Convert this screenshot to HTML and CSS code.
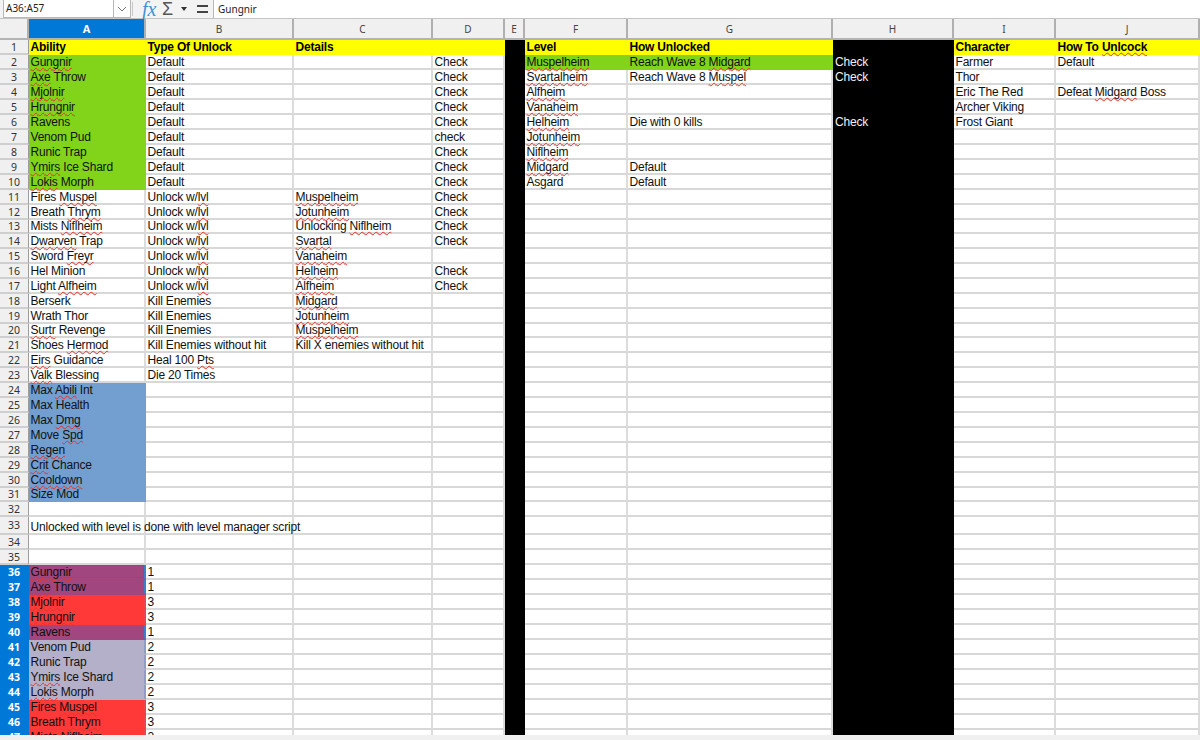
FILE: index.html
```html
<!DOCTYPE html>
<html lang="en">
<head>
  <meta charset="UTF-8">
  <title>Abilities - Calc</title>
  <link rel="stylesheet" href="styles.css">
</head>
<body>
  <div class="formula-bar">
    <div class="name-box"><span class="name-text">A36:A57</span><span class="name-drop"><svg width="10" height="6" viewBox="0 0 10 6"><path d="M1 1l4 4 4-4" fill="none" stroke="#777" stroke-width="1"/></svg></span></div>
    <div class="bar-sep"></div>
    <span class="fx">fx</span>
    <span class="sigma">Σ</span>
    <span class="tri"></span>
    <span class="equals"></span>
    <div class="input-line">Gungnir</div>
  </div>
  <div class="sheet">
    <table>
      <colgroup>
        <col class="c-head"><col class="c-a"><col class="c-b"><col class="c-c"><col class="c-d"><col class="c-e"><col class="c-f"><col class="c-g"><col class="c-h"><col class="c-i"><col class="c-j">
      </colgroup>
      <thead>
        <tr><th class="corner"></th><th class="on">A</th><th>B</th><th>C</th><th>D</th><th>E</th><th>F</th><th>G</th><th>H</th><th>I</th><th>J</th></tr>
      </thead>
      <tbody>
        <tr><th>1</th><td class="yl b">Ability</td><td class="yl b">Type Of Unlock</td><td class="yl b">Details</td><td class="yl"></td><td class="bk"></td><td class="yl b">Level</td><td class="yl b">How Unlocked</td><td class="bk"></td><td class="yl b">Character</td><td class="yl b">How To <u>Unlcock</u></td></tr>
        <tr><th>2</th><td class="gr"><u>Gungnir</u></td><td>Default</td><td></td><td>Check</td><td class="bk"></td><td class="gr"><u>Muspelheim</u></td><td class="gr">Reach Wave 8 <u>Midgard</u></td><td class="bk">Check</td><td>Farmer</td><td>Default</td></tr>
        <tr><th>3</th><td class="gr"><u>Axe</u> Throw</td><td>Default</td><td></td><td>Check</td><td class="bk"></td><td><u>Svartalheim</u></td><td>Reach Wave 8 <u>Muspel</u></td><td class="bk">Check</td><td>Thor</td><td></td></tr>
        <tr><th>4</th><td class="gr"><u>Mjolnir</u></td><td>Default</td><td></td><td>Check</td><td class="bk"></td><td><u>Alfheim</u></td><td></td><td class="bk"></td><td>Eric The Red</td><td>Defeat <u>Midgard</u> Boss</td></tr>
        <tr><th>5</th><td class="gr"><u>Hrungnir</u></td><td>Default</td><td></td><td>Check</td><td class="bk"></td><td><u>Vanaheim</u></td><td></td><td class="bk"></td><td>Archer Viking</td><td></td></tr>
        <tr><th>6</th><td class="gr">Ravens</td><td>Default</td><td></td><td>Check</td><td class="bk"></td><td><u>Helheim</u></td><td>Die with 0 kills</td><td class="bk">Check</td><td>Frost Giant</td><td></td></tr>
        <tr><th>7</th><td class="gr">Venom Pud</td><td>Default</td><td></td><td>check</td><td class="bk"></td><td><u>Jotunheim</u></td><td></td><td class="bk"></td><td></td><td></td></tr>
        <tr><th>8</th><td class="gr">Runic Trap</td><td>Default</td><td></td><td>Check</td><td class="bk"></td><td><u>Niflheim</u></td><td></td><td class="bk"></td><td></td><td></td></tr>
        <tr><th>9</th><td class="gr"><u>Ymirs</u> Ice Shard</td><td>Default</td><td></td><td>Check</td><td class="bk"></td><td><u>Midgard</u></td><td>Default</td><td class="bk"></td><td></td><td></td></tr>
        <tr><th>10</th><td class="gr"><u>Lokis</u> Morph</td><td>Default</td><td></td><td>Check</td><td class="bk"></td><td>Asgard</td><td>Default</td><td class="bk"></td><td></td><td></td></tr>
        <tr><th>11</th><td>Fires <u>Muspel</u></td><td>Unlock w/<u>lvl</u></td><td><u>Muspelheim</u></td><td>Check</td><td class="bk"></td><td></td><td></td><td class="bk"></td><td></td><td></td></tr>
        <tr><th>12</th><td>Breath <u>Thrym</u></td><td>Unlock w/<u>lvl</u></td><td><u>Jotunheim</u></td><td>Check</td><td class="bk"></td><td></td><td></td><td class="bk"></td><td></td><td></td></tr>
        <tr class="short"><th>13</th><td>Mists <u>Niflheim</u></td><td>Unlock w/<u>lvl</u></td><td>Unlocking <u>Niflheim</u></td><td>Check</td><td class="bk"></td><td></td><td></td><td class="bk"></td><td></td><td></td></tr>
        <tr><th>14</th><td><u>Dwarven</u> Trap</td><td>Unlock w/<u>lvl</u></td><td><u>Svartal</u></td><td>Check</td><td class="bk"></td><td></td><td></td><td class="bk"></td><td></td><td></td></tr>
        <tr><th>15</th><td>Sword <u>Freyr</u></td><td>Unlock w/<u>lvl</u></td><td><u>Vanaheim</u></td><td></td><td class="bk"></td><td></td><td></td><td class="bk"></td><td></td><td></td></tr>
        <tr><th>16</th><td>Hel Minion</td><td>Unlock w/<u>lvl</u></td><td><u>Helheim</u></td><td>Check</td><td class="bk"></td><td></td><td></td><td class="bk"></td><td></td><td></td></tr>
        <tr><th>17</th><td>Light <u>Alfheim</u></td><td>Unlock w/<u>lvl</u></td><td><u>Alfheim</u></td><td>Check</td><td class="bk"></td><td></td><td></td><td class="bk"></td><td></td><td></td></tr>
        <tr><th>18</th><td>Berserk</td><td>Kill Enemies</td><td><u>Midgard</u></td><td></td><td class="bk"></td><td></td><td></td><td class="bk"></td><td></td><td></td></tr>
        <tr><th>19</th><td>Wrath Thor</td><td>Kill Enemies</td><td><u>Jotunheim</u></td><td></td><td class="bk"></td><td></td><td></td><td class="bk"></td><td></td><td></td></tr>
        <tr class="short"><th>20</th><td><u>Surtr</u> Revenge</td><td>Kill Enemies</td><td><u>Muspelheim</u></td><td></td><td class="bk"></td><td></td><td></td><td class="bk"></td><td></td><td></td></tr>
        <tr><th>21</th><td>Shoes <u>Hermod</u></td><td>Kill Enemies without hit</td><td>Kill X enemies without hit</td><td></td><td class="bk"></td><td></td><td></td><td class="bk"></td><td></td><td></td></tr>
        <tr><th>22</th><td><u>Eirs</u> Guidance</td><td>Heal 100 <u>Pts</u></td><td></td><td></td><td class="bk"></td><td></td><td></td><td class="bk"></td><td></td><td></td></tr>
        <tr><th>23</th><td><u>Valk</u> Blessing</td><td>Die 20 Times</td><td></td><td></td><td class="bk"></td><td></td><td></td><td class="bk"></td><td></td><td></td></tr>
        <tr><th>24</th><td class="bl">Max <u>Abili</u> Int</td><td></td><td></td><td></td><td class="bk"></td><td></td><td></td><td class="bk"></td><td></td><td></td></tr>
        <tr><th>25</th><td class="bl">Max Health</td><td></td><td></td><td></td><td class="bk"></td><td></td><td></td><td class="bk"></td><td></td><td></td></tr>
        <tr><th>26</th><td class="bl">Max <u>Dmg</u></td><td></td><td></td><td></td><td class="bk"></td><td></td><td></td><td class="bk"></td><td></td><td></td></tr>
        <tr><th>27</th><td class="bl">Move <u>Spd</u></td><td></td><td></td><td></td><td class="bk"></td><td></td><td></td><td class="bk"></td><td></td><td></td></tr>
        <tr><th>28</th><td class="bl"><u>Regen</u></td><td></td><td></td><td></td><td class="bk"></td><td></td><td></td><td class="bk"></td><td></td><td></td></tr>
        <tr><th>29</th><td class="bl"><u>Crit</u> Chance</td><td></td><td></td><td></td><td class="bk"></td><td></td><td></td><td class="bk"></td><td></td><td></td></tr>
        <tr><th>30</th><td class="bl"><u>Cooldown</u></td><td></td><td></td><td></td><td class="bk"></td><td></td><td></td><td class="bk"></td><td></td><td></td></tr>
        <tr class="short"><th>31</th><td class="bl">Size Mod</td><td></td><td></td><td></td><td class="bk"></td><td></td><td></td><td class="bk"></td><td></td><td></td></tr>
        <tr><th>32</th><td></td><td></td><td></td><td></td><td class="bk"></td><td></td><td></td><td class="bk"></td><td></td><td></td></tr>
        <tr class="tall"><th>33</th><td>Unlocked with level is done with level manager script</td><td></td><td></td><td></td><td class="bk"></td><td></td><td></td><td class="bk"></td><td></td><td></td></tr>
        <tr><th>34</th><td></td><td></td><td></td><td></td><td class="bk"></td><td></td><td></td><td class="bk"></td><td></td><td></td></tr>
        <tr><th>35</th><td></td><td></td><td></td><td></td><td class="bk"></td><td></td><td></td><td class="bk"></td><td></td><td></td></tr>
        <tr class="picked"><th>36</th><td class="pu cur"><u>Gungnir</u></td><td>1</td><td></td><td></td><td class="bk"></td><td></td><td></td><td class="bk"></td><td></td><td></td></tr>
        <tr class="picked"><th>37</th><td class="pu"><u>Axe</u> Throw</td><td>1</td><td></td><td></td><td class="bk"></td><td></td><td></td><td class="bk"></td><td></td><td></td></tr>
        <tr class="picked"><th>38</th><td class="rd"><u>Mjolnir</u></td><td>3</td><td></td><td></td><td class="bk"></td><td></td><td></td><td class="bk"></td><td></td><td></td></tr>
        <tr class="picked"><th>39</th><td class="rd"><u>Hrungnir</u></td><td>3</td><td></td><td></td><td class="bk"></td><td></td><td></td><td class="bk"></td><td></td><td></td></tr>
        <tr class="picked"><th>40</th><td class="pu">Ravens</td><td>1</td><td></td><td></td><td class="bk"></td><td></td><td></td><td class="bk"></td><td></td><td></td></tr>
        <tr class="picked"><th>41</th><td class="lv">Venom Pud</td><td>2</td><td></td><td></td><td class="bk"></td><td></td><td></td><td class="bk"></td><td></td><td></td></tr>
        <tr class="picked"><th>42</th><td class="lv">Runic Trap</td><td>2</td><td></td><td></td><td class="bk"></td><td></td><td></td><td class="bk"></td><td></td><td></td></tr>
        <tr class="picked"><th>43</th><td class="lv"><u>Ymirs</u> Ice Shard</td><td>2</td><td></td><td></td><td class="bk"></td><td></td><td></td><td class="bk"></td><td></td><td></td></tr>
        <tr class="picked"><th>44</th><td class="lv"><u>Lokis</u> Morph</td><td>2</td><td></td><td></td><td class="bk"></td><td></td><td></td><td class="bk"></td><td></td><td></td></tr>
        <tr class="picked"><th>45</th><td class="rd">Fires <u>Muspel</u></td><td>3</td><td></td><td></td><td class="bk"></td><td></td><td></td><td class="bk"></td><td></td><td></td></tr>
        <tr class="picked"><th>46</th><td class="rd">Breath <u>Thrym</u></td><td>3</td><td></td><td></td><td class="bk"></td><td></td><td></td><td class="bk"></td><td></td><td></td></tr>
        <tr class="picked"><th>47</th><td class="rd">Mists <u>Niflheim</u></td><td>2</td><td></td><td></td><td class="bk"></td><td></td><td></td><td class="bk"></td><td></td><td></td></tr>
      </tbody>
    </table>
  </div>
  <div class="status-strip"></div>
</body>
</html>
```

FILE: styles.css
```css
html, body {
  margin: 0;
  padding: 0;
  height: 100%;
  overflow: hidden;
}
body {
  display: flex;
  flex-direction: column;
  height: 740px;
  background-color: #fff;
  font-family: "Liberation Sans", Arial, sans-serif;
  color: #111;
}

/* formula bar */
.formula-bar {
  display: flex;
  align-items: center;
  flex: 0 0 19px;
  box-sizing: border-box;
  height: 19px;
  background-color: #f3f3f3;
  border-bottom: 1px solid #c4c4c4;
  font-family: "Noto Sans", sans-serif;
}
.name-box {
  display: flex;
  align-items: stretch;
  box-sizing: border-box;
  width: 128px;
  height: 18px;
  margin-left: 3px;
  background-color: #fff;
  border: 1px solid #b8b8b8;
  border-top: 0;
}
.name-text {
  flex: 1;
  padding-left: 2px;
  font-size: 10px;
  line-height: 17px;
  color: #222;
}
.name-drop {
  display: flex;
  align-items: center;
  justify-content: center;
  width: 16px;
  border-left: 1px solid #b8b8b8;
}
.bar-sep {
  width: 1px;
  height: 14px;
  margin-left: 1px;
  background-color: #c8c8c8;
}
.fx {
  width: 20px;
  margin-left: 9px;
  font-family: "Liberation Serif", serif;
  font-style: italic;
  font-size: 20px;
  line-height: 18px;
  color: #3f93d2;
}
.sigma {
  width: 14px;
  font-family: "Liberation Sans", sans-serif;
  font-size: 18px;
  line-height: 16px;
  color: #555;
}
.tri {
  width: 0;
  height: 0;
  margin-left: 5px;
  border-left: 3px solid transparent;
  border-right: 3px solid transparent;
  border-top: 4px solid #333;
}
.equals {
  box-sizing: border-box;
  width: 11px;
  height: 8px;
  margin-left: 10px;
  border-top: 2px solid #444;
  border-bottom: 2px solid #444;
}
.input-line {
  flex: 1;
  box-sizing: border-box;
  height: 18px;
  margin-left: 5px;
  padding-left: 4px;
  background-color: #fff;
  border-left: 1px solid #b8b8b8;
  font-size: 10px;
  line-height: 18px;
  color: #222;
}

/* grid */
.sheet {
  flex: 1;
  overflow: hidden;
}
table {
  width: 1200px;
  table-layout: fixed;
  border-collapse: separate;
  border-spacing: 0;
  font-size: 12px;
  letter-spacing: -0.2px;
}
.c-head { width: 29px; }
.c-a { width: 117px; }
.c-b { width: 148px; }
.c-c { width: 139px; }
.c-d { width: 72px; }
.c-e { width: 20px; }
.c-f { width: 103px; }
.c-g { width: 205px; }
.c-h { width: 121px; }
.c-i { width: 102px; }
.c-j { width: 144px; }

thead th {
  box-sizing: border-box;
  height: 21px;
  padding: 0;
  background-color: #f0f0f0;
  border-right: 2px solid #b0b0b0;
  border-bottom: 2px solid #b4b4b4;
  font-family: "Noto Sans", sans-serif;
  font-size: 10px;
  font-weight: normal;
  letter-spacing: 0;
  color: #444;
}
thead th.on {
  background-color: #0078d7;
  color: #fff;
  font-weight: bold;
  font-size: 11px;
}
tbody th {
  box-sizing: border-box;
  height: 15px;
  padding: 0;
  background-color: #f0f0f0;
  border-right: 1px solid #9c9c9c;
  border-bottom: 2px solid #cfcfcf;
  font-family: "Noto Sans", sans-serif;
  font-size: 10.5px;
  font-weight: normal;
  letter-spacing: 0;
  line-height: 12px;
  color: #333;
}
tbody tr.picked th {
  background-color: #0078d7;
  border-bottom-color: #0078d7;
  border-right-color: #0078d7;
  color: #fff;
  font-weight: bold;
}
td {
  box-sizing: border-box;
  height: 15px;
  padding: 2px 0 0 1.5px;
  border-right: 2px solid #dcdcdc;
  border-bottom: 2px solid #d8d8d8;
  line-height: 11px;
  white-space: nowrap;
}
tr.short td, tr.short th {
  height: 14px;
  padding-top: 1px;
}
tr.short th {
  padding-top: 0;
}
tr.tall td, tr.tall th {
  height: 18px;
}
tr.tall td {
  vertical-align: bottom;
}
u {
  text-decoration: underline wavy #e0332b 1px;
  text-decoration-skip-ink: none;
  text-underline-offset: 1px;
}
.b { font-weight: bold; color: #000; }
.yl { background-color: #ffff00; border-color: #ffff00; }
.gr { background-color: #81d41a; border-color: #81d41a; }
.bl { background-color: #729fcf; border-right-color: #729fcf; border-bottom-color: #729fcf; }
.bk { background-color: #000; border-color: #000; color: #f2f2f2; padding-left: 2px; }
.pu { background-color: #a1467e; border-color: #a1467e; border-right-color: #3b7fcb; }
.rd { background-color: #ff3838; border-color: #ff3838; border-right-color: #e8454f; }
.lv { background-color: #b4b0c9; border-color: #b4b0c9; border-right-color: #8f9cc8; }
.cur { box-shadow: inset 0 0 0 1px #2a6fc4; }

.status-strip {
  flex: 0 0 5px;
  background-color: #f0f0f0;
}
```
